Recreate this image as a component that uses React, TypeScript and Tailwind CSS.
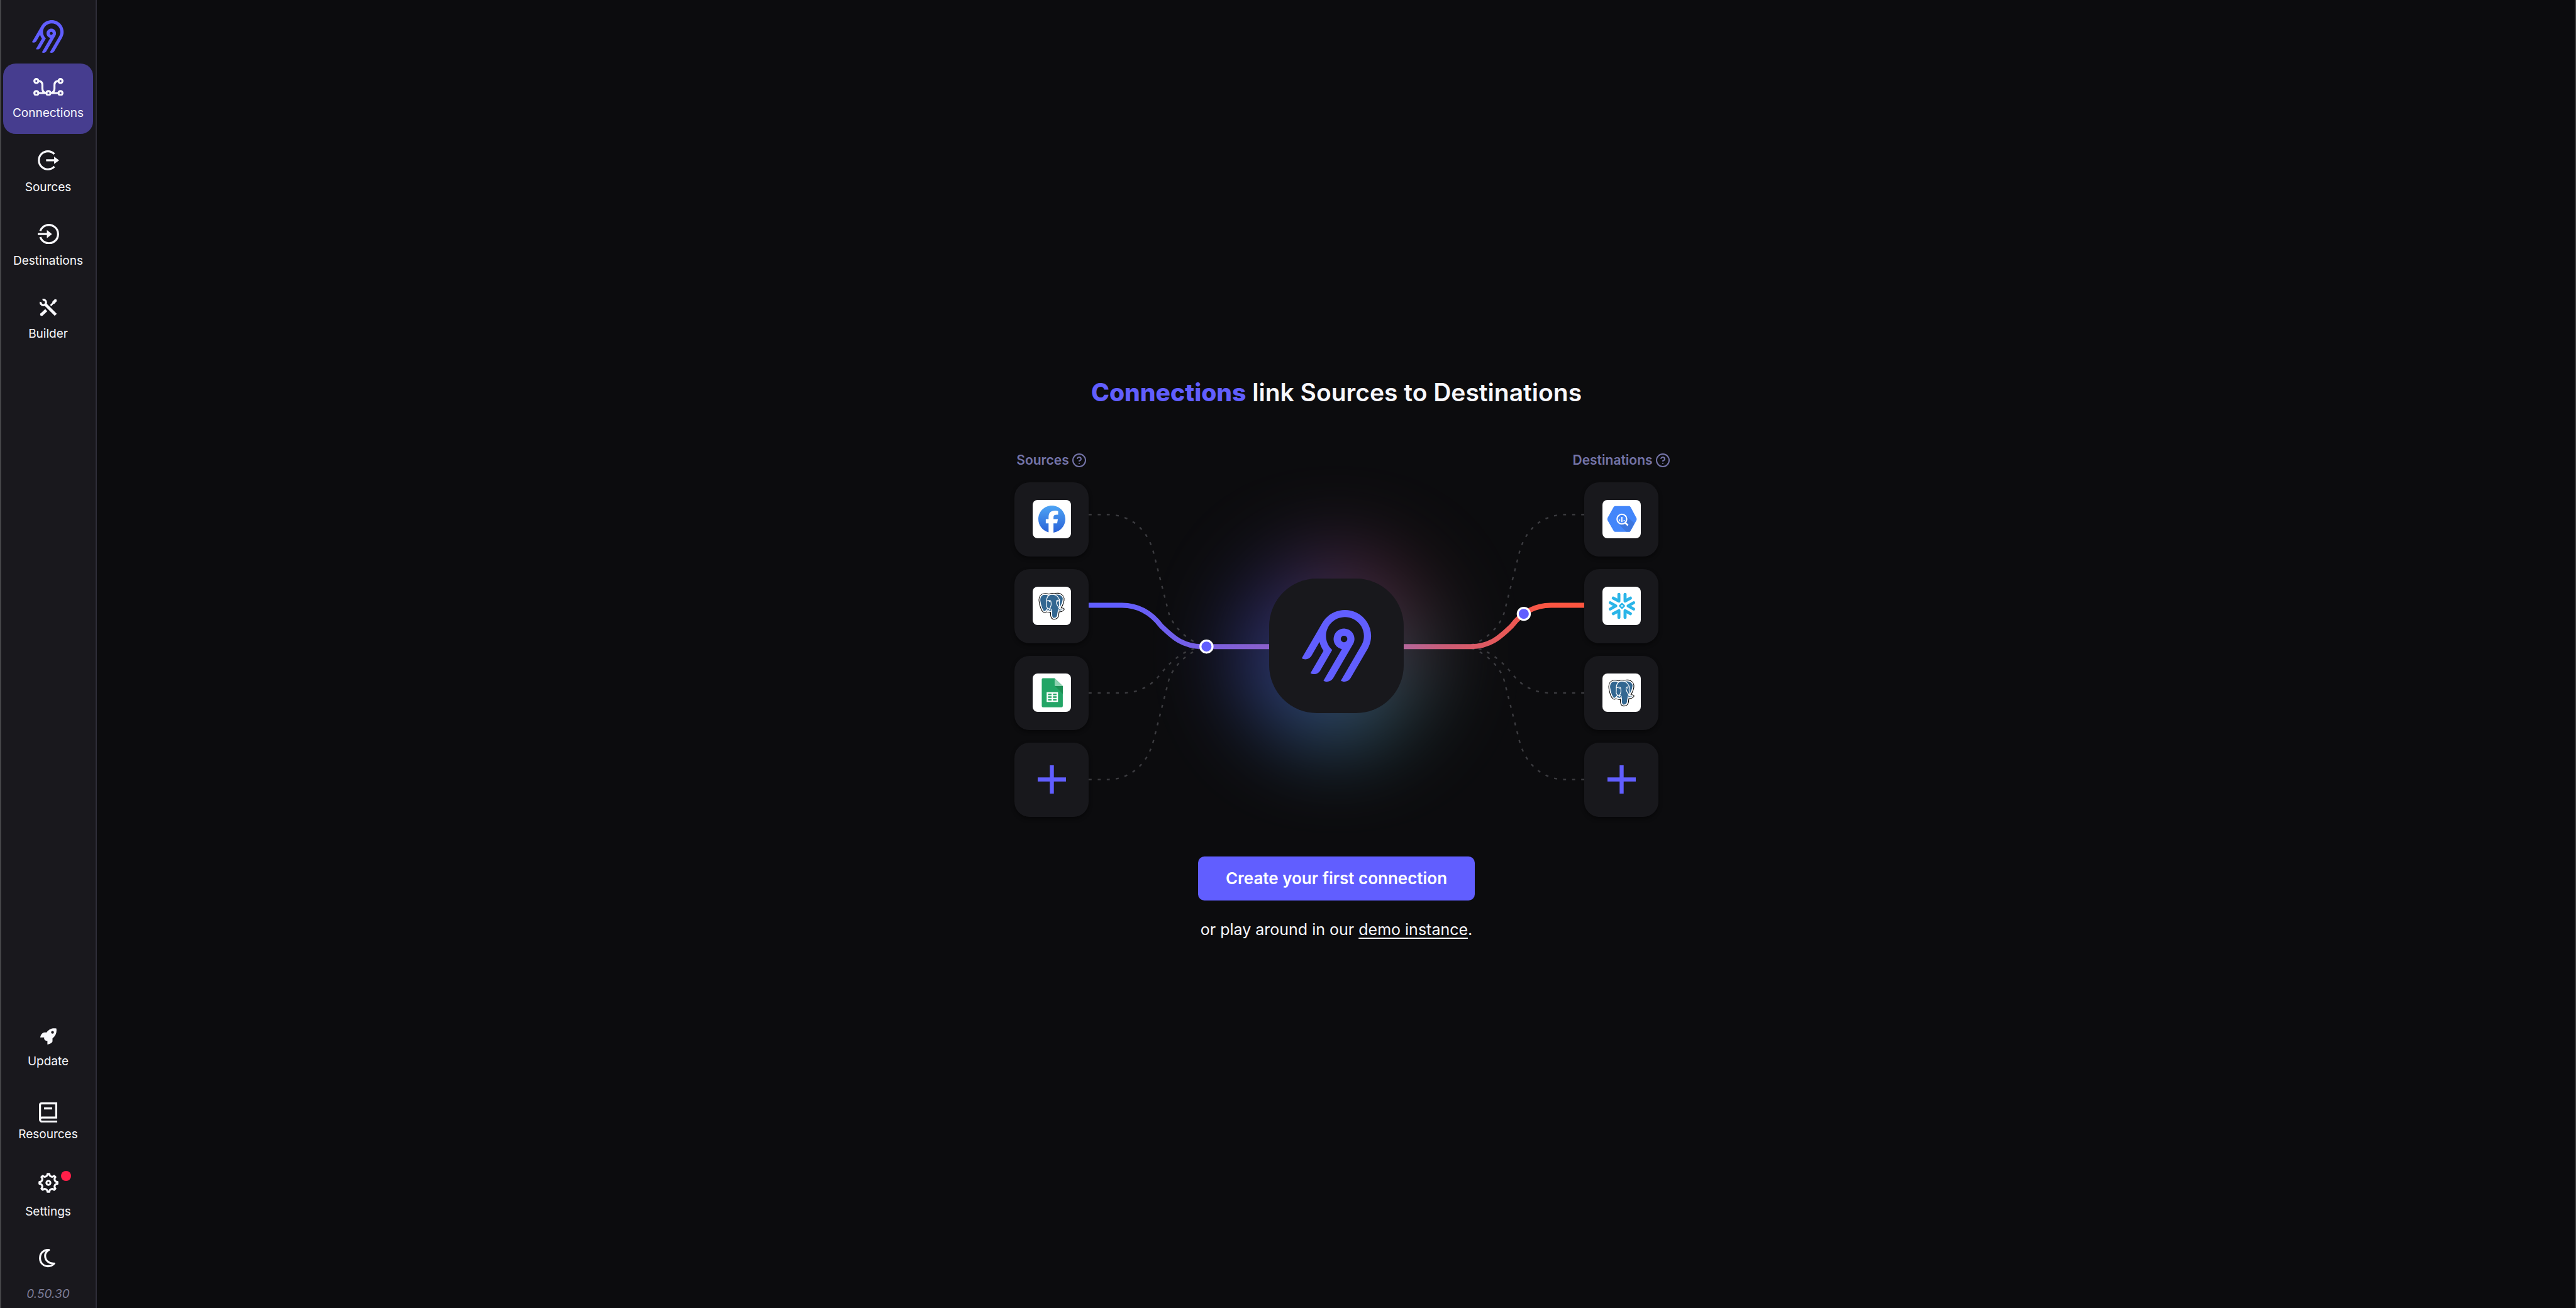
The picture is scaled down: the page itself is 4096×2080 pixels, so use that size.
import type { ReactNode } from "react";
import { SiAirbyte, SiFacebook, SiPostgresql } from "react-icons/si";
import { CircleHelp } from "lucide-react";

/* ---------- Sidebar icons ---------- */

function ConnectionsIcon() {
  return (
    <svg viewBox="0 0 60 36" className="w-12" fill="none" stroke="currentColor" strokeWidth="4">
      <circle cx="6" cy="6" r="4" />
      <circle cx="54" cy="6" r="4" />
      <circle cx="6" cy="30" r="4" />
      <circle cx="30" cy="30" r="4" />
      <circle cx="54" cy="30" r="4" />
      <path d="M10 30H26M34 30H50M10 6C16 6 18 9 18 14V21C18 26 20 29 25 30M50 6C44 6 42 9 42 14V21C42 26 40 29 35 30" />
    </svg>
  );
}

function SourcesIcon() {
  return (
    <svg viewBox="0 0 44 40" className="w-[35px]" fill="none" stroke="currentColor" strokeWidth="4">
      <path d="M34.5 7.5A18 18 0 1 0 34.5 32.5M18 20H35" />
      <path d="M34 12.500L44 20L34 27.500Z" fill="currentColor" stroke="none" />
    </svg>
  );
}

function DestinationsIcon() {
  return (
    <svg viewBox="0 0 42 40" className="w-[34px]" fill="none" stroke="currentColor" strokeWidth="4">
      <path d="M5 14A18 18 0 1 1 5 26M0 20H19" />
      <path d="M18 12L28 20L18 28Z" fill="currentColor" stroke="none" />
    </svg>
  );
}

function BuilderIcon() {
  return (
    <svg viewBox="0 0 36 36" className="w-7" fill="none" stroke="currentColor">
      <path d="M6 2.200A5.600 5.600 0 1 1 2 6.500" strokeWidth="4.200" />
      <path d="M10.500 10.500L33 33" strokeWidth="6" />
      <path d="M4 32.500L13.500 23.500" strokeWidth="6" />
      <circle cx="4" cy="32.300" r="3" fill="currentColor" stroke="none" />
      <path d="M22.500 14L28 8.500" strokeWidth="3.600" />
      <path d="M26 6L31 1L34.500 1.500L35 5L30 10.500L26.500 10Z" fill="currentColor" stroke="none" />
    </svg>
  );
}

function RocketIcon() {
  return (
    <svg viewBox="0 0 32 32" className="w-[26px]" fill="currentColor" fillRule="evenodd">
      <path d="M31.500 .6C24-.6 18 1 12.500 8.200H8.500C4 9 1 12 0 18H7.800C6.500 21.500 9.500 25.600 14 24.800V32C19 31 22.500 29 24 26V20C30.500 14.500 32.800 8 31.500 .6ZM24 5.400A2.700 2.700 0 1 1 24 10.800A2.700 2.700 0 1 1 24 5.400Z" />
    </svg>
  );
}

function BookIcon() {
  return (
    <svg viewBox="0 0 36 40" className="w-[29px]" fill="none" stroke="currentColor" strokeWidth="4">
      <path d="M34 31V2H5A3 3 0 0 0 2 5V34M36 30H6A4 4 0 0 0 6 38H36M10 12H26" />
    </svg>
  );
}

function GearIcon() {
  return (
    <svg viewBox="0 0 40 40" className="w-8" fill="none" stroke="currentColor" strokeWidth="3.800" strokeLinejoin="round">
      <path d="M37.900 18.100V21.900A5.400 5.400 0 0 0 33.990 31.330L31.330 33.990A5.400 5.400 0 0 0 21.900 37.900H18.100A5.400 5.400 0 0 0 8.670 33.990L6.010 31.330A5.400 5.400 0 0 0 2.100 21.900V18.100A5.400 5.400 0 0 0 6.010 8.670L8.670 6.010A5.400 5.400 0 0 0 18.100 2.100H21.900A5.400 5.400 0 0 0 31.330 6.010L33.990 8.670A5.400 5.400 0 0 0 37.900 18.100Z" />
      <circle cx="20" cy="20" r="4" />
    </svg>
  );
}

function MoonIcon() {
  return (
    <svg viewBox="0 0 32 36" className="w-[26px]" fill="none" stroke="currentColor" strokeWidth="3.800" strokeLinejoin="round">
      <path d="M19.500 2C9 1 2 8.500 2 18C2 27.500 9 34 17.500 34C23 34 27 31.800 29.800 28.600C19 29.500 12 22 12 13.500C12 8.500 15 4.500 19.500 2Z" />
    </svg>
  );
}

/* ---------- Connector logos, drawn on a 76-unit tile ---------- */

function FacebookLogo() {
  return (
    <>
      <svg className="absolute size-0" aria-hidden="true">
        <defs>
          <linearGradient id="fb" x1="0" y1="0" x2="0" y2="1">
            <stop offset="0" stopColor="#4ea4f4" />
            <stop offset="1" stopColor="#2a62d8" />
          </linearGradient>
        </defs>
      </svg>
      <SiFacebook className="size-[43px]" fill="url(#fb)" />
    </>
  );
}

function PostgresLogo() {
  const silhouette =
    "M9.650 1.300C7 .5 4.500 .3 2.800 1.500C.8 3 .6 5.600 1 8C1.500 11 2.700 14.600 3.900 16.300C4.700 17.300 5.700 17.600 6.500 16.600L7.500 16.400C7.900 17.300 9.800 17.700 11.800 16.800L12 21C12.300 22.900 13 23.800 14.600 23.700C16.500 23.400 17.700 22.600 18 20.800L18.500 16.600C20.300 16.700 22.400 16.300 23.300 14.900C22.900 14.300 21.500 14.600 19.900 14.300C21.800 11.300 23.500 7 23.200 4.500C23 2.500 20.800 .8 18.500 .4C17.200 .2 16 .3 14.700 .8C13 .3 11 .4 9.650 1.300Z";
  return (
    <span className="relative grid place-items-center">
      <svg viewBox="0 0 24 24" className="size-10 overflow-visible" strokeLinejoin="round">
        <path d={silhouette} fill="#000" stroke="#000" strokeWidth="2.200" />
        <path d={silhouette} fill="#336791" stroke="#fff" strokeWidth=".9" />
      </svg>
      <SiPostgresql className="absolute size-10 text-white" />
    </span>
  );
}

function SheetsLogo() {
  return (
    <svg viewBox="0 0 76 76" className="size-full">
      <path d="M20.500 9.300H43.500L59.700 25V64.500A2.500 2.500 0 0 1 57.200 67H20.500A2.500 2.500 0 0 1 18 64.500V11.800A2.500 2.500 0 0 1 20.500 9.300Z" fill="#23a566" />
      <path d="M43.500 9.300V23A2 2 0 0 0 45.500 25H59.700Z" fill="#8ed1b1" />
      <path d="M44.500 25H59.700V40.500Z" fill="#1c8f54" />
      <path d="M27.700 37H50.200V56.300H27.700Z" fill="#fff" />
      <path d="M30.500 39.800H37.500V43H30.500ZM40.300 39.800H47.400V43H40.300ZM30.500 45.200H37.500V48.300H30.500ZM40.300 45.200H47.400V48.300H40.300ZM30.500 50.500H37.500V53.600H30.500ZM40.300 50.500H47.400V53.600H40.300Z" fill="#23a566" />
    </svg>
  );
}

function BigQueryLogo() {
  return (
    <svg viewBox="0 0 76 76" className="size-full" fill="none">
      <path d="M25.500 14H52.500Q53.500 14 54.200 15L65.800 36.500Q66.500 38 65.800 39.500L54.200 60.500Q53.500 61.600 52.500 61.600H25.500Q24.400 61.600 23.700 60.500L11.700 39.500Q11 38 11.700 36.500L23.700 15Q24.400 14 25.500 14Z" fill="#4386fa" stroke="#4386fa" strokeWidth="3.500" strokeLinejoin="round" />
      <path d="M46 31L63.500 46L54.500 62.800H47L32 47.500L46 46Z" fill="#3d76de" />
      <circle cx="38.500" cy="38" r="9.600" stroke="#fff" strokeWidth="2.600" fill="#4386fa" />
      <path d="M45.500 45.500L50.500 50.500" stroke="#fff" strokeWidth="3.200" />
      <path d="M34 38.500V42.500M38.500 33.500V44M43 40V42.500" stroke="#fff" strokeWidth="2.200" />
    </svg>
  );
}

function SnowflakeLogo() {
  return (
    <svg viewBox="0 0 76 76" className="size-full" fill="none" stroke="#2bb5e8" strokeWidth="6" strokeLinecap="round" strokeLinejoin="round">
      <path d="M21.500 22.500L32.600 28.500V15M55.500 22.500L44.800 28.500V15M21.500 53.500L32.600 47.500V61M55.500 53.500L44.800 47.500V61M15.500 31.800L26.500 38L15.500 44.200M61.800 31.800L50.800 38L61.800 44.200" />
      <path d="M38.700 33.500L43.200 38L38.700 42.500L34.200 38Z" strokeWidth="3.200" />
    </svg>
  );
}

/* ---------- Shared pieces ---------- */

function NavItem({ label, icon, className, dot }: { label: string; icon: ReactNode; className: string; dot?: boolean }) {
  return (
    <a href="#" className={`flex flex-col items-center rounded-[20px] pt-[22px] ${className}`}>
      <span className="relative flex h-[30px] items-center justify-center">
        {icon}
        {dot && <span className="absolute -top-1 left-9 size-4 rounded-full bg-[#ff1f49]" />}
      </span>
      <span className="text-[19px] leading-6">{label}</span>
    </a>
  );
}

function Card({ logo }: { logo: ReactNode }) {
  return (
    <li className="flex size-[118px] items-center justify-center rounded-[24px] bg-[#18181c] shadow-[0_3px_6px_rgba(0,0,0,0.45)]">
      <span className="flex size-[61px] items-center justify-center overflow-hidden rounded-lg bg-white">{logo}</span>
    </li>
  );
}

function AddCard({ label }: { label: string }) {
  return (
    <li>
      <button
        type="button"
        aria-label={label}
        className="flex size-[118px] items-center justify-center rounded-[24px] bg-[#18181c] text-[#615eff] shadow-[0_3px_6px_rgba(0,0,0,0.45)]"
      >
        <svg viewBox="0 0 56 56" className="w-[45px]" stroke="currentColor" strokeWidth="8">
          <path d="M28 0V56M0 28H56" />
        </svg>
      </button>
    </li>
  );
}

function Column({ title, addLabel, logos }: { title: string; addLabel: string; logos: ReactNode[] }) {
  return (
    <section className="flex w-[118px] shrink-0 flex-col items-center gap-[21px]">
      <h2 className="flex items-center gap-1 text-[21px] leading-7 font-semibold whitespace-nowrap text-[#7474a8]">
        {title}
        <CircleHelp className="size-6" strokeWidth={2} />
      </h2>
      <ul className="flex flex-col gap-5">
        {logos.map((logo, i) => (
          <Card key={i} logo={logo} />
        ))}
        <AddCard label={addLabel} />
      </ul>
    </section>
  );
}

function DashedWires() {
  return (
    <>
      <path d="M0 64H39C75 64 115 85 129 140L158 255C164 284 200 322 240 326" />
      <path d="M0 418H66C100 418 125 404 144 379C163 356 185 334 225 326" />
      <path d="M0 590H39C75 590 115 567 129 512L158 397C164 368 200 330 240 326" />
    </>
  );
}

function Wires() {
  return (
    <div className="relative isolate flex h-[532px] flex-1 items-center justify-center">
      <div className="absolute size-[310px] rounded-full bg-[conic-gradient(#6e4270,#6c2a3c_45deg,#5c5a6a_90deg,#3c6c70_135deg,#4682ac_180deg,#3c62bc_225deg,#4248b8_270deg,#382f7c_315deg,#6e4270)] opacity-65 blur-[66px]" />
      <svg viewBox="0 0 984 664" className="absolute inset-0 size-full" fill="none">
        <defs>
          <linearGradient id="wire" gradientUnits="userSpaceOnUse" x1="0" y1="0" x2="984" y2="0">
            <stop offset="0" stopColor="#615eff" />
            <stop offset=".06" stopColor="#615eff" />
            <stop offset=".364" stopColor="#8b60cb" />
            <stop offset=".636" stopColor="#b4679b" />
            <stop offset=".72" stopColor="#cb5c76" />
            <stop offset=".92" stopColor="#fb5643" />
            <stop offset="1" stopColor="#ff553f" />
          </linearGradient>
        </defs>
        <g stroke="#3c3c40" strokeWidth="3" strokeDasharray="6 12">
          <DashedWires />
          <g transform="translate(984 0) scale(-1 1)">
            <DashedWires />
          </g>
        </g>
        <path
          d="M0 244H66C100 244 125 260 144 285C165 305 185 326 225 326H759C799 326 819 305 840 285C859 260 884 244 918 244H984"
          stroke="url(#wire)"
          strokeWidth="10"
        />
        <g fill="#615eff" stroke="#fff" strokeWidth="4">
          <circle cx="234" cy="326" r="12" />
          <circle cx="864" cy="261" r="12" />
        </g>
      </svg>
      <div className="relative mb-3 flex size-[214px] items-center justify-center rounded-[76px] bg-[#18181c]">
        <SiAirbyte className="size-[114px] text-[#615eff]" />
      </div>
    </div>
  );
}

/* ---------- Page ---------- */

export default function App() {
  return (
    <div className="flex min-h-screen border-x-2 border-l-[#454548] border-r-[#3c3c3c] bg-[#0c0c0e] font-[Inter,sans-serif] text-[#f8f8fc]">
      <nav className="flex w-[152px] shrink-0 flex-col border-r-2 border-[#2e2d38] bg-[#19181d] pr-1 pl-[3px]">
        <a href="#" aria-label="Airbyte" className="flex justify-center pt-8 pr-0.5 pb-[17px] text-[#615eff]">
          <SiAirbyte className="size-[52px]" />
        </a>
        <div className="flex flex-col gap-[5px]">
          <NavItem label="Connections" icon={<ConnectionsIcon />} className="h-28 gap-[15px] bg-[#463d8f]" />
          <NavItem label="Sources" icon={<SourcesIcon />} className="h-28 gap-4" />
          <NavItem label="Destinations" icon={<DestinationsIcon />} className="h-28 gap-4" />
          <NavItem label="Builder" icon={<BuilderIcon />} className="h-28 gap-[15px]" />
        </div>
        <div className="mt-auto flex flex-col pb-2.5">
          <NavItem label="Update" icon={<RocketIcon />} className="gap-[13px] pb-8" />
          <NavItem label="Resources" icon={<BookIcon />} className="gap-2 pb-7" />
          <NavItem label="Settings" icon={<GearIcon />} className="gap-[19px] pb-[27px]" dot />
          <button type="button" aria-label="Toggle theme" className="flex h-[72px] items-center justify-center pr-1 pb-0.5">
            <MoonIcon />
          </button>
          <p className="pt-2 text-center text-[19px] leading-6 text-[#7e7e98] italic">0.50.30</p>
        </div>
      </nav>

      <main className="flex flex-1 flex-col items-center justify-center pt-[17px] pl-0.5">
        <h1 className="text-[39px] leading-[48px] font-semibold">
          <span className="font-extrabold text-[#615eff]">Connections</span> link Sources to Destinations
        </h1>
        <div className="mt-[70px] flex w-full max-w-[1024px] items-end">
          <Column
            title="Sources"
            addLabel="Add a source"
            logos={[<FacebookLogo />, <PostgresLogo />, <SheetsLogo />]}
          />
          <Wires />
          <Column
            title="Destinations"
            addLabel="Add a destination"
            logos={[<BigQueryLogo />, <SnowflakeLogo />, <PostgresLogo />]}
          />
        </div>
        <button type="button" className="mt-[63px] h-[70px] rounded-[10px] bg-[#615eff] px-11 text-[26px] font-semibold text-white">
          Create your first connection
        </button>
        <p className="mt-[26px] text-[25px] leading-10">
          or play around in our{" "}
          <a href="#" className="underline decoration-2 underline-offset-4">
            demo instance
          </a>
          .
        </p>
      </main>
    </div>
  );
}
